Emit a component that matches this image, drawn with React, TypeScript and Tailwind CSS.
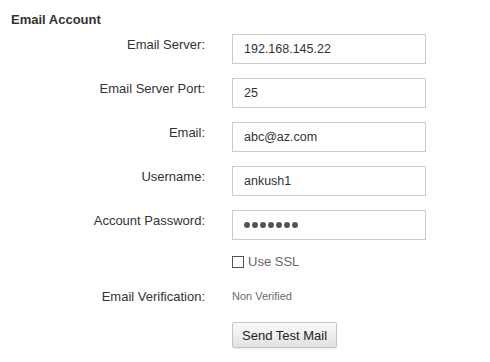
import React from "react";

const Label = ({ children }: { children: React.ReactNode }) => (
  <div className="w-[205px] shrink-0 text-right pt-[3px] text-[13px] leading-[15px] text-[#333]">
    {children}
  </div>
);

const Field = ({ children }: { children: React.ReactNode }) => (
  <div className="ml-[27px] w-[194px] h-[30px] border border-[#cccccc] bg-white flex items-center pl-[11px] text-[12.5px] text-[#333]">
    {children}
  </div>
);

export default function App() {
  return (
    <div
      className="w-[490px] h-[362px] bg-white pt-[12px]"
      style={{ fontFamily: '"Liberation Sans", Arial, sans-serif' }}
    >
      <div className="pl-[11px] text-[13px] leading-[15px] font-bold text-[#333]">Email Account</div>
      <div className="mt-[7px] flex flex-col gap-[14px]">
        <div className="flex items-start">
          <Label>Email Server:</Label>
          <Field>192.168.145.22</Field>
        </div>
        <div className="flex items-start">
          <Label>Email Server Port:</Label>
          <Field>25</Field>
        </div>
        <div className="flex items-start">
          <Label>Email:</Label>
          <Field>abc@az.com</Field>
        </div>
        <div className="flex items-start">
          <Label>Username:</Label>
          <Field>ankush1</Field>
        </div>
        <div className="flex items-start">
          <Label>Account Password:</Label>
          <Field>
            <div className="flex gap-[2px]">
              {[0, 1, 2, 3, 4, 5, 6].map((i) => (
                <span key={i} className="block w-[6px] h-[6px] rounded-full bg-[#555]" />
              ))}
            </div>
          </Field>
        </div>
      </div>
      <div className="mt-[15px] ml-[232px] flex items-center h-[13px]">
        <span className="block w-[12px] h-[12px] border border-[#555] bg-white" />
        <span className="ml-[4px] text-[13px] leading-[15px] text-[#666]">Use SSL</span>
      </div>
      <div className="mt-[21px] flex items-center h-[15px]">
        <div className="w-[205px] text-right text-[13px] leading-[15px] text-[#333]">Email Verification:</div>
        <div className="ml-[27px] text-[11px] leading-[13px] text-[#6b6b6b]">Non Verified</div>
      </div>
      <div className="mt-[18px] ml-[232px]">
        <button className="h-[26px] px-[9px] border border-[#c4c4c4] rounded-[2px] bg-gradient-to-b from-[#fafafa] to-[#e2e2e2] text-[13px] text-[#222] leading-[15px] shadow-[0_1px_1px_rgba(0,0,0,0.08)]">
          Send Test Mail
        </button>
      </div>
    </div>
  );
}
